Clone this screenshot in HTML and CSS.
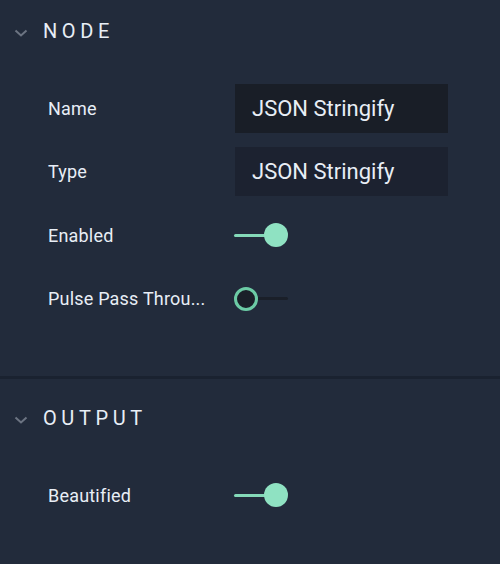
FILE: index.html
```html
<!DOCTYPE html>
<html>
<head>
<meta charset="utf-8">
<link rel="stylesheet" href="styles.css">
</head>
<body>
<div class="panel">
  <section class="section">
    <div class="header">
      <svg class="chev" width="14" height="8" viewBox="0 0 14 8"><path d="M1.5 1.5 L7 6.5 L12.5 1.5" fill="none" stroke="#6c7482" stroke-width="2"/></svg>
      <span class="title">NODE</span>
    </div>
    <div class="rows">
      <div class="row"><span class="label">Name</span><div class="input focused">JSON Stringify</div></div>
      <div class="row"><span class="label">Type</span><div class="input">JSON Stringify</div></div>
      <div class="row"><span class="label">Enabled</span><div class="toggle on"><span class="track"></span><span class="knob"></span></div></div>
      <div class="row"><span class="label">Pulse Pass Throu...</span><div class="toggle off"><span class="track"></span><span class="knob"></span></div></div>
    </div>
  </section>
  <div class="divider"></div>
  <section class="section second">
    <div class="header">
      <svg class="chev" width="14" height="8" viewBox="0 0 14 8"><path d="M1.5 1.5 L7 6.5 L12.5 1.5" fill="none" stroke="#6c7482" stroke-width="2"/></svg>
      <span class="title">OUTPUT</span>
    </div>
    <div class="rows">
      <div class="row"><span class="label">Beautified</span><div class="toggle on"><span class="track"></span><span class="knob"></span></div></div>
    </div>
  </section>
</div>
</body>
</html>
```
FILE: styles.css
```css
html, body {
  margin: 0;
  padding: 0;
  background: #222b3b;
}
body {
  width: 500px;
  height: 564px;
  overflow: hidden;
  font-family: Roboto, "Liberation Sans", sans-serif;
  color: #e8eef6;
}
.panel {
  display: flex;
  flex-direction: column;
}
.section {
  padding-bottom: 45.5px;
}
.section.second {
  padding-top: 8px;
  padding-bottom: 0;
}
.header {
  height: 62px;
  display: flex;
  align-items: center;
  padding-left: 14px;
}
.chev {
  margin-right: 15px;
  margin-top: 3px;
}
.title {
  font-size: 20px;
  letter-spacing: 4.6px;
  color: #e8eef6;
}
.rows {
  padding-top: 14.5px;
  padding-left: 48px;
}
.row {
  height: 63.5px;
  display: flex;
  align-items: center;
}
.label {
  width: 187px;
  font-size: 18px;
  letter-spacing: 0.2px;
}
.input {
  width: 213px;
  height: 49px;
  box-sizing: border-box;
  padding-left: 17px;
  display: flex;
  align-items: center;
  background: #1c2230;
  font-size: 22px;
}
.input.focused {
  background: #191e27;
}
.toggle {
  position: relative;
  width: 54px;
  height: 24px;
  margin-left: -1px;
}
.track {
  position: absolute;
  left: 0;
  right: 0;
  top: 10.5px;
  height: 3px;
  border-radius: 2px;
}
.knob {
  position: absolute;
  top: 0;
  width: 24px;
  height: 24px;
  border-radius: 50%;
  box-sizing: border-box;
}
.on .track {
  background: #84d9b8;
  right: 12px;
}
.on .knob {
  right: 0;
  background: #8fe2c2;
}
.off .track {
  background: #1a1f29;
  left: 12px;
}
.off .knob {
  left: 0;
  background: #1a1f28;
  border: 3px solid #6ccba5;
}
.divider {
  height: 3px;
  background: #1a2230;
}
```
